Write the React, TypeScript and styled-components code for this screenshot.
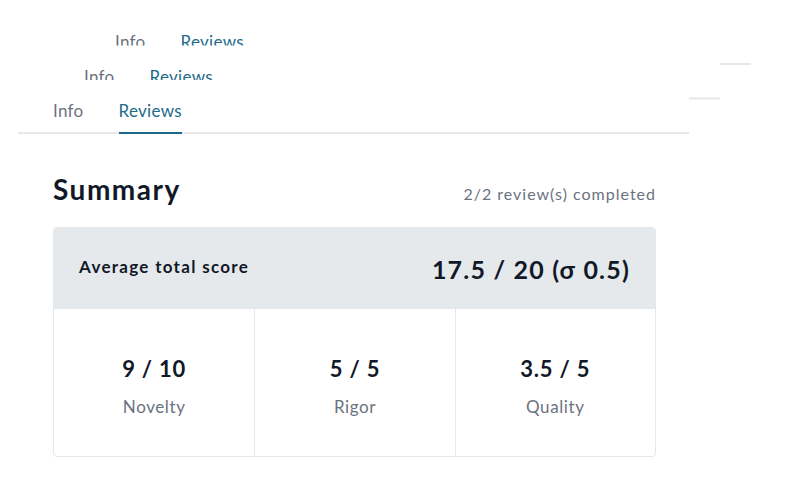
import { ReactElement } from 'react';
import styled, { createGlobalStyle } from 'styled-components';

interface Score {
  value: string,
  label: string
}

const scores: Score[] = [
  { value: '9 / 10', label: 'Novelty' },
  { value: '5 / 5', label: 'Rigor' },
  { value: '3.5 / 5', label: 'Quality' },
];

function Panel({ ghost }: { ghost?: boolean }): ReactElement {
  return (
    <>
      <TabBar>
        <Tab>Info</Tab>
        <Tab $active>Reviews</Tab>
      </TabBar>
      {!ghost && (
        <Content>
          <SummaryHead>
            <Title>Summary</Title>
            <Status>2/2 review(s) completed</Status>
          </SummaryHead>
          <ScoreTable>
            <TotalRow>
              <TotalLabel>Average total score</TotalLabel>
              <TotalValue>17.5 / 20 (σ 0.5)</TotalValue>
            </TotalRow>
            <CellRow>
              {scores.map((s) => (
                <Cell key={s.label}>
                  <CellValue>{s.value}</CellValue>
                  <CellLabel>{s.label}</CellLabel>
                </Cell>
              ))}
            </CellRow>
          </ScoreTable>
        </Content>
      )}
    </>
  );
}

export default function App(): ReactElement {
  return (
    <>
      <GlobalStyle />
      <Page>
        <Stack>
          <Card $step={2}><Panel ghost /></Card>
          <Card $step={1}><Panel ghost /></Card>
          <Card $step={0}><Panel /></Card>
        </Stack>
      </Page>
    </>
  );
}

const GlobalStyle = createGlobalStyle`
  html, body {
    margin: 0;
    background: #ffffff;
    font-family: Lato, "Noto Sans", sans-serif;
    color: #111827;
  }
`;

const Page = styled.div`
  width: 800px;
  height: 500px;
  overflow: hidden;
  padding: 80px 0 0 18px;
  box-sizing: border-box;
`;

const Stack = styled.div`
  display: grid;
  width: 671px;
`;

const Card = styled.div<{ $step: number }>`
  grid-area: 1 / 1;
  background: #ffffff;
  transform: ${({ $step }) => `translate(${$step * 31}px, ${$step * -34.5}px)`};
`;

const TabBar = styled.div`
  display: flex;
  gap: 35px;
  padding: 0 35px;
  border-bottom: 2px solid #e5e7eb;
`;

const Tab = styled.div<{ $active?: boolean }>`
  padding: 21px 0 11px;
  margin-bottom: -2px;
  font-size: 17px;
  line-height: 20px;
  letter-spacing: 0.3px;
  color: ${({ $active }) => ($active ? '#1d6a8a' : '#6b7280')};
  border-bottom: 2px solid ${({ $active }) => ($active ? '#1d6a8a' : 'transparent')};
`;

const Content = styled.div`
  padding: 37px 33px 0 35px;
`;

const SummaryHead = styled.div`
  display: flex;
  justify-content: space-between;
  align-items: baseline;
`;

const Title = styled.h2`
  margin: 0;
  font-size: 28px;
  line-height: 36px;
  font-weight: 700;
  letter-spacing: 1.5px;
  color: #111827;
`;

const Status = styled.span`
  font-size: 16px;
  letter-spacing: 1px;
  color: #6b7280;
`;

const ScoreTable = styled.div`
  margin-top: 20px;
  border: 1px solid #e5e7eb;
  border-radius: 4px;
  overflow: hidden;
`;

const TotalRow = styled.div`
  display: flex;
  justify-content: space-between;
  align-items: center;
  height: 81px;
  padding: 0 25px;
  background: #e5e9ec;
`;

const TotalLabel = styled.span`
  font-size: 17px;
  font-weight: 700;
  letter-spacing: 1.3px;
  color: #111827;
  margin-top: -4px;
`;

const TotalValue = styled.span`
  font-size: 25px;
  font-weight: 700;
  letter-spacing: 1.2px;
  color: #111827;
`;

const CellRow = styled.div`
  display: grid;
  grid-template-columns: repeat(3, 1fr);
`;

const Cell = styled.div`
  display: flex;
  flex-direction: column;
  align-items: center;
  justify-content: center;
  gap: 14px;
  height: 147px;
  padding-top: 6px;
  box-sizing: border-box;
  & + & {
    border-left: 1px solid #e5e7eb;
  }
`;

const CellValue = styled.span`
  font-size: 22px;
  font-weight: 700;
  letter-spacing: 0.8px;
  color: #111827;
`;

const CellLabel = styled.span`
  font-size: 17px;
  letter-spacing: 0.6px;
  color: #6b7280;
`;
